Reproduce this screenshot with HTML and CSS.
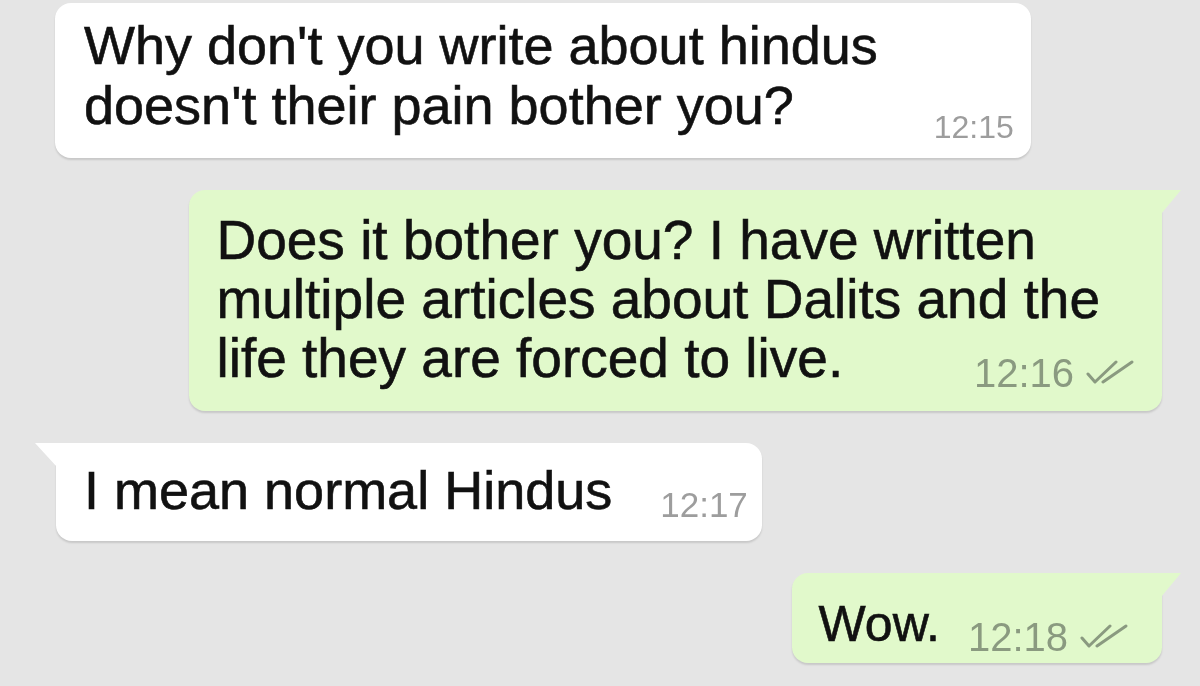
FILE: index.html
```html
<!DOCTYPE html>
<html lang="en">
<head>
<meta charset="utf-8">
<title>Chat</title>
<link rel="stylesheet" href="styles.css">
</head>
<body>
<main class="chat">
  <div class="msg in m1">
    <p class="text">Why don't you write about hindus<br>doesn't their pain bother you?</p>
    <span class="meta">12:15</span>
  </div>
  <div class="msg out m2 tail-right">
    <p class="text">Does it bother you? I have written<br>multiple articles about Dalits and the<br>life they are forced to live.</p>
    <span class="meta">12:16<svg class="ticks" viewBox="0 0 48 26" aria-hidden="true"><path d="M2 14 L9 22 L30 2"/><path d="M17 22 L46 2"/></svg></span>
  </div>
  <div class="msg in m3 tail-left">
    <p class="text">I mean normal Hindus</p>
    <span class="meta">12:17</span>
  </div>
  <div class="msg out m4 tail-right">
    <p class="text">Wow.</p>
    <span class="meta">12:18<svg class="ticks" viewBox="0 0 48 26" aria-hidden="true"><path d="M2 14 L9 22 L30 2"/><path d="M17 22 L46 2"/></svg></span>
  </div>
</main>
</body>
</html>
```
FILE: styles.css
```css
html, body {
  margin: 0;
  padding: 0;
}
body {
  background: #e5e5e5;
  font-family: "Liberation Sans", Arial, sans-serif;
  color: #111111;
  width: 1200px;
  height: 686px;
  overflow: hidden;
}
.chat {
  display: flex;
  flex-direction: column;
  gap: 32px;
  padding-top: 3px;
  filter: blur(0.6px);
}
.msg {
  position: relative;
  display: flex;
  align-items: flex-end;
  border-radius: 16px;
  box-shadow: 0 2px 2px rgba(0, 0, 0, 0.13);
}
.in {
  background: #ffffff;
  align-self: flex-start;
}
.out {
  background: #e1f9cb;
  align-self: flex-end;
}
.text {
  margin: 0;
  white-space: nowrap;
  -webkit-text-stroke: 0.6px currentColor;
}
.meta {
  display: flex;
  align-items: center;
  white-space: nowrap;
  line-height: 38px;
}
.in .meta {
  color: #9d9d9d;
  font-size: 35px;
}
.out .meta {
  color: #8a9a80;
  font-size: 40px;
}
.ticks {
  width: 48px;
  height: 26px;
  margin-left: 12px;
  fill: none;
  stroke: currentColor;
  stroke-width: 3;
  stroke-linecap: round;
  stroke-linejoin: round;
}

/* message 1 */
.m1 {
  margin-left: 55px;
  padding: 12px 17px 23px 29px;
  gap: 56px;
}
.m1 .text {
  font-size: 54px;
  line-height: 60px;
}
.m1 .meta {
  font-size: 32px;
  margin-bottom: -11px;
}

/* message 2 */
.m2 {
  display: grid;
  margin-right: 38px;
  padding: 21px 62px 23px 27px;
  border-top-right-radius: 0;
}
.m2 > * {
  grid-area: 1 / 1;
}
.m2 .text {
  font-size: 55px;
  line-height: 59px;
}
.m2 .meta {
  justify-self: end;
  align-self: end;
  margin-right: -34px;
  margin-bottom: -4px;
}

/* message 3 */
.m3 {
  margin-left: 56px;
  padding: 17px 14px 21px 28px;
  gap: 48px;
  border-top-left-radius: 0;
}
.m3 .text {
  font-size: 54px;
  line-height: 60px;
}
.m3 .meta {
  margin-bottom: -4px;
}

/* message 4 */
.m4 {
  margin-right: 38px;
  padding: 22px 34px 10px 27px;
  gap: 28px;
  border-top-right-radius: 0;
}
.m4 .text {
  font-size: 50px;
  line-height: 58px;
}
.m4 .meta {
  margin-bottom: -3px;
}

/* bubble tails */
.tail-right::after,
.tail-left::after {
  content: "";
  position: absolute;
  top: 0;
  height: 24px;
  background: inherit;
}
.tail-right::after {
  right: -19px;
  width: 20px;
  clip-path: polygon(0 0, 100% 0, 0 100%);
}
.tail-left::after {
  left: -21px;
  width: 22px;
  clip-path: polygon(0 0, 100% 0, 100% 100%);
}
```
